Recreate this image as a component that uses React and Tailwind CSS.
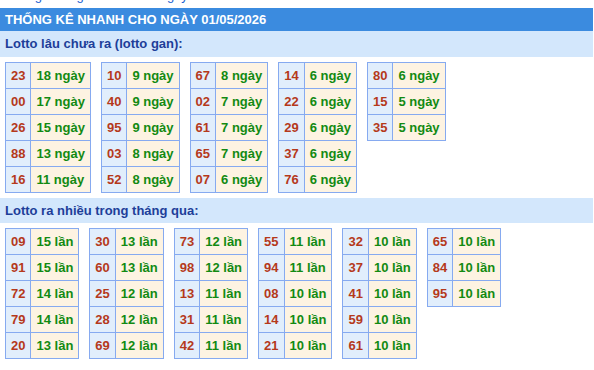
import React from "react";

const gan = [
  [["23","18"],["00","17"],["26","15"],["88","13"],["16","11"]],
  [["10","9"],["40","9"],["95","9"],["03","8"],["52","8"]],
  [["67","8"],["02","7"],["61","7"],["65","7"],["07","6"]],
  [["14","6"],["22","6"],["29","6"],["37","6"],["76","6"]],
  [["80","6"],["15","5"],["35","5"]],
];

const nhieu = [
  [["09","15"],["91","15"],["72","14"],["79","14"],["20","13"]],
  [["30","13"],["60","13"],["25","12"],["28","12"],["69","12"]],
  [["73","12"],["98","12"],["13","11"],["31","11"],["42","11"]],
  [["55","11"],["94","11"],["08","10"],["14","10"],["21","10"]],
  [["32","10"],["37","10"],["41","10"],["59","10"],["61","10"]],
  [["65","10"],["84","10"],["95","10"]],
];

function Tbl({ rows, unit }) {
  return (
    <table className="border-collapse self-start">
      <tbody>
        {rows.map(([n, v], i) => (
          <tr key={i}>
            <td className="border border-[#86aaf0] bg-[#e1eefc] px-[5px] py-0 leading-[25px] text-center text-[#b5391b] font-bold">
              {n}
            </td>
            <td className="border border-[#86aaf0] bg-[#fdf3e2] px-[5px] py-0 leading-[25px] text-[#128a12] font-bold whitespace-nowrap">
              {v} {unit}
            </td>
          </tr>
        ))}
      </tbody>
    </table>
  );
}

export default function App() {
  return (
    <div className="w-[593px] bg-white text-[13px]" style={{ fontFamily: '"Liberation Sans", Arial, sans-serif' }}>
      <div className="h-[8px] overflow-hidden">
        <div className="-mt-[12px] pl-[5px] leading-[16px] text-[#1a5fd0]">
          Thống kê lô gan miền Bắc ngày 01/05/2026
        </div>
      </div>
      <div className="h-[23px] bg-[#3b8bdf] pl-[5px] flex items-center text-white font-bold">
        THỐNG KÊ NHANH CHO NGÀY 01/05/2026
      </div>
      <div className="h-[26px] bg-[#d3e7fc] pl-[5px] flex items-center text-[#1d3e99] font-bold">
        Lotto lâu chưa ra (lotto gan):
      </div>
      <div className="flex flex-wrap gap-x-[10px] pl-[5px] pt-[5px]">
        {gan.map((r, i) => (
          <Tbl key={i} rows={r} unit="ngày" />
        ))}
      </div>
      <div className="mt-[5px] h-[25px] bg-[#d3e7fc] pl-[5px] flex items-center text-[#1d3e99] font-bold">
        Lotto ra nhiều trong tháng qua:
      </div>
      <div className="flex flex-wrap gap-x-[10px] pl-[5px] pt-[5px]">
        {nhieu.map((r, i) => (
          <Tbl key={i} rows={r} unit="lần" />
        ))}
      </div>
    </div>
  );
}
